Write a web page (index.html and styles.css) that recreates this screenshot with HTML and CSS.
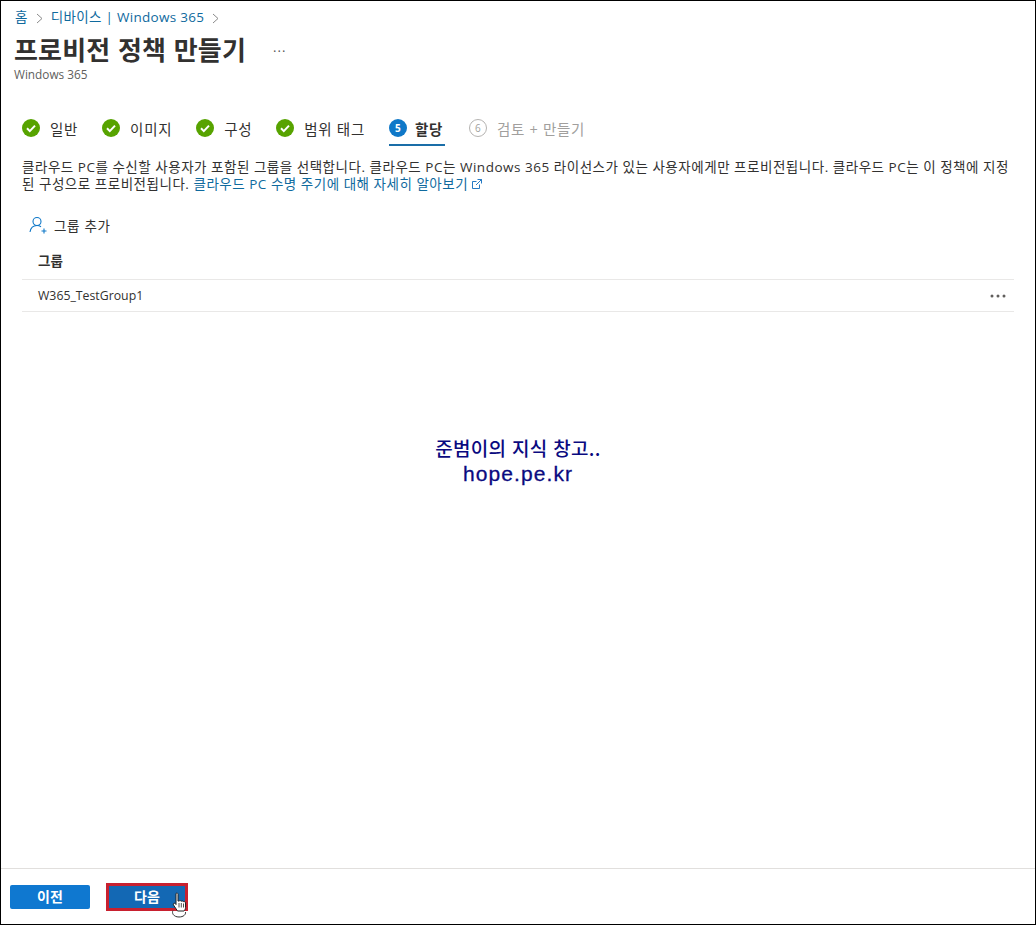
FILE: index.html
```html
<!DOCTYPE html>
<html lang="ko">
<head>
<meta charset="utf-8">
<title>프로비전 정책 만들기</title>
<link rel="stylesheet" href="styles.css">
</head>
<body>
<div class="frame">
  <header class="head">
    <nav class="crumbs">
      <a>홈</a>
      <svg class="chev" width="7" height="11" viewBox="0 0 7 11"><path d="M1 1l5 4.5L1 10" fill="none" stroke="#8a8a8a"/></svg>
      <a>디바이스 | Windows 365</a>
      <svg class="chev" width="7" height="11" viewBox="0 0 7 11"><path d="M1 1l5 4.5L1 10" fill="none" stroke="#8a8a8a"/></svg>
    </nav>
    <div class="title-row">
      <h1>프로비전 정책 만들기</h1>
      <span class="title-more">...</span>
    </div>
    <div class="subtitle">Windows 365</div>
  </header>

  <div class="steps">
    <div class="step"><svg class="ic" width="18" height="18" viewBox="0 0 18 18"><circle cx="9" cy="9" r="9" fill="#57a300"/><path d="M5 9.3l2.8 2.8L13 6.6" fill="none" stroke="#fff" stroke-width="2"/></svg><span>일반</span></div>
    <div class="step"><svg class="ic" width="18" height="18" viewBox="0 0 18 18"><circle cx="9" cy="9" r="9" fill="#57a300"/><path d="M5 9.3l2.8 2.8L13 6.6" fill="none" stroke="#fff" stroke-width="2"/></svg><span>이미지</span></div>
    <div class="step"><svg class="ic" width="18" height="18" viewBox="0 0 18 18"><circle cx="9" cy="9" r="9" fill="#57a300"/><path d="M5 9.3l2.8 2.8L13 6.6" fill="none" stroke="#fff" stroke-width="2"/></svg><span>구성</span></div>
    <div class="step"><svg class="ic" width="18" height="18" viewBox="0 0 18 18"><circle cx="9" cy="9" r="9" fill="#57a300"/><path d="M5 9.3l2.8 2.8L13 6.6" fill="none" stroke="#fff" stroke-width="2"/></svg><span>범위 태그</span></div>
    <div class="step current"><span class="num">5</span><span>할당</span></div>
    <div class="step todo"><span class="num">6</span><span>검토 + 만들기</span></div>
  </div>

  <p class="desc">클라우드 PC를 수신할 사용자가 포함된 그룹을 선택합니다. 클라우드 PC는 Windows 365 라이선스가 있는 사용자에게만 프로비전됩니다. 클라우드 PC는 이 정책에 지정된 구성으로 프로비전됩니다. <a>클라우드 PC 수명 주기에 대해 자세히 알아보기 <svg class="ext" width="10" height="10" viewBox="0 0 10 10"><path d="M7.500 5.500v4h-7v-7h4M5.500.5h4v4M9.500.5L4 6" fill="none" stroke="#0f6cbd" stroke-width=".9"/></svg></a></p>

  <div class="cmd">
    <svg width="19" height="19" viewBox="0 0 19 19"><circle cx="8" cy="5.500" r="4" fill="none" stroke="#0f78c8" stroke-width="1.100"/><path d="M1 16c.6-4 3.200-6.500 7-6.500 1.600 0 2.900.4 4 1.200" fill="none" stroke="#0f78c8" stroke-width="1.100"/><path d="M15 12.500v5M12.500 15h5" stroke="#0f78c8" stroke-width="1.100"/></svg>
    <span>그룹 추가</span>
  </div>

  <div class="table">
    <div class="row row-head">그룹</div>
    <div class="row">
      <span>W365_TestGroup1</span>
      <svg class="dots" width="16" height="4" viewBox="0 0 16 4"><circle cx="2" cy="2" r="1.500"/><circle cx="8" cy="2" r="1.500"/><circle cx="14" cy="2" r="1.500"/></svg>
    </div>
  </div>

  <div class="mark">
    <div class="mark-ko">준범이의 지식 창고..</div>
    <div class="mark-en">hope.pe.kr</div>
  </div>

  <footer class="foot">
    <button class="btn">이전</button>
    <span class="btn-outline"><button class="btn btn-next">다음</button></span>
    <svg class="cursor" width="17" height="26" viewBox="0 0 17 26"><path d="M5 1.500c1-.8 2-.3 2 1V9l1 .1c.8-.8 1.800-.6 2.200.2.800-.7 1.800-.4 2.100.4 1-.5 2.200 0 2.200 1.300v4.500c0 1.500-.7 2.500-1.500 3.500H6.500L2.500 13c-.8-1.200.6-2.400 1.700-1.400l.8.900z" fill="#fff" stroke="#222" stroke-width="1"/><path d="M8 11v4.500M10.300 11v4.500M12.500 11.500v4" stroke="#222" stroke-width=".8"/><path d="M2 18.500c-1.500 2.500.5 6.500 6 6.500 4.500 0 7-2.500 6.500-5" fill="none" stroke="#333" stroke-width="1"/></svg>
  </footer>
</div>
</body>
</html>
```

FILE: styles.css
```css
* { box-sizing: border-box; }
html, body { margin: 0; padding: 0; background: #fff; }
body {
  width: 1036px;
  height: 925px;
  overflow: hidden;
  font-family: "Open Sans", "Noto Sans CJK KR", sans-serif;
  font-size: 13px;
  color: #323130;
}
a { color: #0f6a9e; }
.frame {
  position: relative;
  width: 1036px;
  height: 925px;
  border: 1px solid #000;
  display: flex;
  flex-direction: column;
}
.head { padding: 8px 0 0 13px; }
.crumbs {
  display: flex;
  align-items: center;
  gap: 8px;
  height: 17px;
  padding-left: 1px;
  font-size: 13.500px;
  line-height: 17px;
  letter-spacing: .3px;
}
.chev { margin-top: 1px; }
.title-row {
  display: flex;
  align-items: center;
  margin-top: 6px;
  height: 34px;
}
h1 {
  margin: 0;
  font-size: 26px;
  line-height: 34px;
  font-weight: 700;
  font-family: "Noto Sans CJK KR", sans-serif;
  letter-spacing: .2px;
  color: #323130;
}
.title-more {
  margin-left: 27px;
  font-size: 13px;
  line-height: 13px;
  letter-spacing: 1px;
  color: #555;
  position: relative;
  top: -2px;
}
.subtitle {
  font-size: 11.800px;
  line-height: 16px;
  color: #605e5c;
}
.steps {
  display: flex;
  margin: 33px 0 0 21px;
  height: 31px;
  gap: 24px;
  font-size: 14.500px;
  line-height: 22px;
  letter-spacing: .7px;
}
.step {
  display: flex;
  align-items: flex-start;
  gap: 10px;
  height: 31px;
  padding-top: 4px;
  color: #323130;
}
.step .ic { flex: none; }
.num {
  flex: none;
  width: 18px;
  height: 18px;
  border-radius: 50%;
  background: #0f78c8;
  color: #fff;
  font-size: 10px;
  font-weight: 700;
  line-height: 18px;
  text-align: center;
  letter-spacing: 0;
}
.current {
  font-weight: 700;
  border-bottom: 2px solid #1a6ea8;
  gap: 8px;
  width: 56px;
}
.todo { color: #a19f9d; gap: 10px; }
.todo .num {
  background: #fff;
  border: 1px solid #b5b3b1;
  color: #a19f9d;
  line-height: 16px;
  font-weight: 400;
}
.desc {
  margin: 13px 21px 0 21px;
  font-size: 13.500px;
  line-height: 17px;
  letter-spacing: .52px;
  color: #323130;
}
.ext { vertical-align: 0; }
.cmd {
  display: flex;
  align-items: center;
  gap: 6px;
  margin: 22px 0 0 28px;
  height: 20px;
  font-size: 13.500px;
  letter-spacing: .7px;
}
.table { margin: 8px 21px 0 21px; }
.row {
  display: flex;
  align-items: center;
  justify-content: space-between;
  height: 32px;
  padding: 0 8px 0 16px;
  border-bottom: 1px solid #e9e8e7;
  font-size: 12.300px;
}
.row-head {
  height: 37px;
  padding-bottom: 2px;
  font-weight: 700;
  font-size: 13.500px;
}
.dots { fill: #605e5c; }
.mark {
  position: absolute;
  left: 0;
  right: 0;
  top: 433px;
  text-align: center;
  color: #0a0a80;
  font-family: "Noto Sans CJK KR", sans-serif;
}
.mark-ko {
  font-size: 19px;
  line-height: 28px;
  font-weight: 500;
  letter-spacing: .3px;
}
.mark-en {
  font-family: "Liberation Sans", sans-serif;
  font-size: 21px;
  line-height: 24px;
  letter-spacing: 1.100px;
  -webkit-text-stroke: .3px #0a0a80;
}
.foot {
  position: relative;
  margin-top: auto;
  height: 56px;
  border-top: 1px solid #e1dfdd;
  display: flex;
  align-items: center;
  gap: 19px;
  padding-left: 9px;
}
.btn {
  width: 80px;
  height: 24px;
  border: 0;
  border-radius: 2px;
  padding: 0 0 2px;
  background: #0f78d0;
  color: #fff;
  font-family: "Noto Sans CJK KR", sans-serif;
  font-size: 14px;
  font-weight: 700;
  line-height: 20px;
}
.btn-outline {
  display: flex;
  border: 3px solid #c8202f;
  margin-left: -3px;
}
.btn-next { width: 76px; height: 22px; border-radius: 0; background: #1368b4; }
.cursor { position: absolute; left: 170px; top: 23px; }
```
